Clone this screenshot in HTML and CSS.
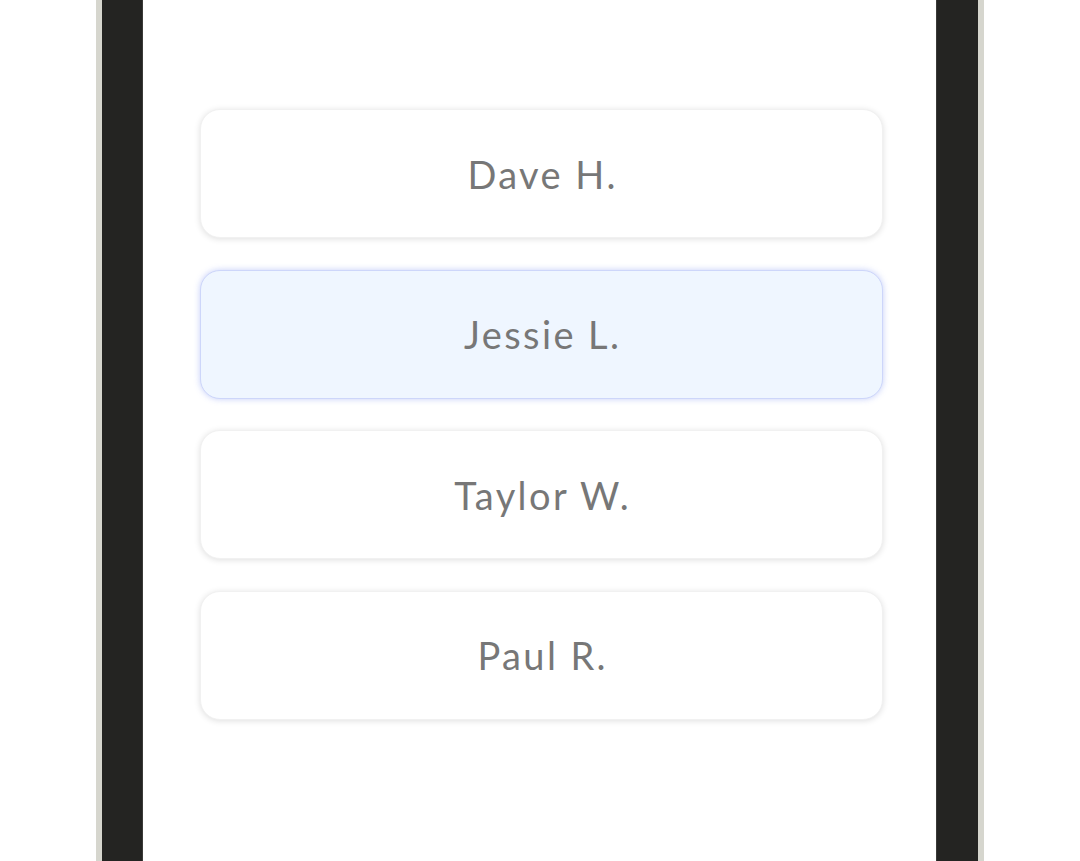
FILE: index.html
```html
<!DOCTYPE html>
<html>
<head>
<meta charset="utf-8">
<link rel="stylesheet" href="styles.css">
</head>
<body>
<div class="frame">
  <div class="edge"></div>
  <div class="bezel bezel-left"></div>
  <main class="screen">
    <div class="list">
      <div class="option">Dave H.</div>
      <div class="option selected">Jessie L.</div>
      <div class="option">Taylor W.</div>
      <div class="option">Paul R.</div>
    </div>
  </main>
  <div class="bezel bezel-right"></div>
  <div class="edge"></div>
</div>
</body>
</html>
```
FILE: styles.css
```css
html, body {
  margin: 0;
  padding: 0;
  background: #ffffff;
}
body {
  font-family: "Lato", "Noto Sans", sans-serif;
}
.frame {
  display: flex;
  height: 861px;
  padding: 0 96px;
  box-sizing: border-box;
  overflow: hidden;
}
.edge {
  width: 6px;
  background: #d6d6ce;
  flex: none;
}
.bezel {
  background: #242422;
  flex: none;
}
.bezel-left {
  width: 41px;
  border-right: 1px solid #3a3a38;
  box-sizing: border-box;
}
.bezel-right {
  width: 42px;
  border-left: 1px solid #3a3a38;
  box-sizing: border-box;
}
.screen {
  flex: 1;
  background: #ffffff;
  padding: 109px 53px 0 57px;
}
.list {
  display: flex;
  flex-direction: column;
  gap: 31.5px;
}
.option {
  height: 129px;
  border-radius: 20px;
  background: #ffffff;
  border: 1px solid #f1f1f1;
  box-sizing: border-box;
  box-shadow: 0 1px 6px rgba(0, 0, 0, 0.13);
  display: flex;
  align-items: center;
  justify-content: center;
  font-size: 38px;
  color: #777777;
  letter-spacing: 2.4px;
  padding-left: 2.4px;
}
.option.selected {
  background: #eff6ff;
  border-color: #cdd6fa;
  box-shadow: 0 0 6px rgba(110, 135, 240, 0.4);
}
```
